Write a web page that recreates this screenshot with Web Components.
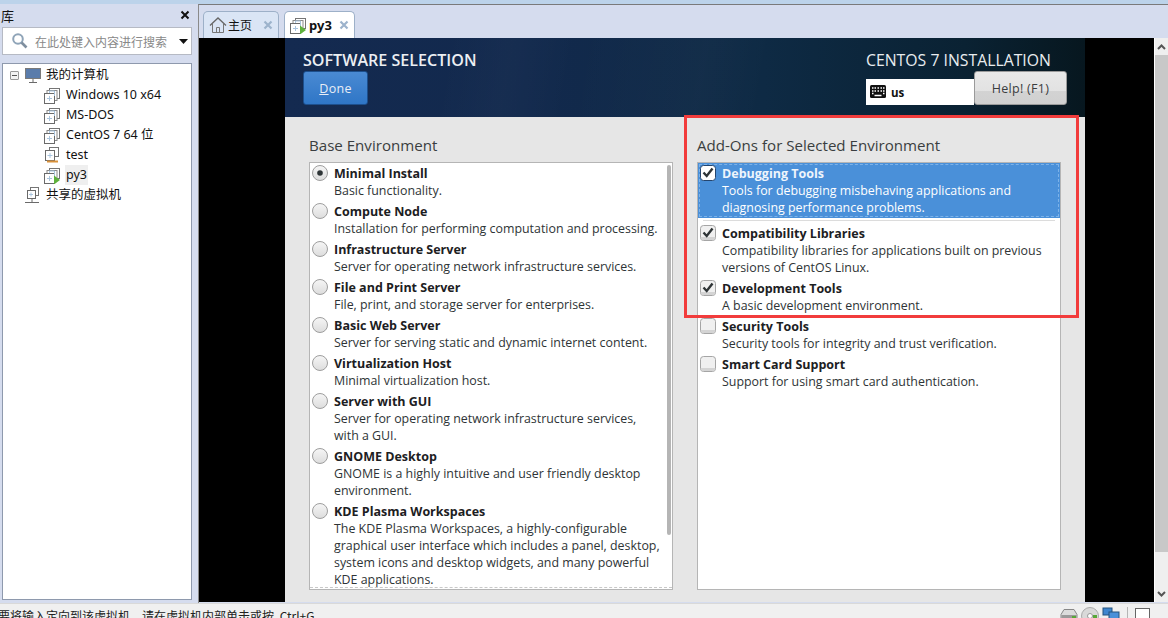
<!DOCTYPE html>
<html>
<head>
<meta charset="utf-8">
<style>
  html, body { margin: 0; height: 100%; overflow: hidden; background: #d5dcee; }
  body { font-family: "Noto Sans", "Noto Sans CJK SC", sans-serif; }
</style>
</head>
<body>
<vm-app></vm-app>

<script>
  const VM_SQUARES = `<rect x="5.5" y="2.5" width="10" height="10" fill="#fff" stroke="#757575"/><rect x="3" y="4.5" width="10" height="10" fill="#fff" stroke="#8a8a8a"/><rect x=".5" y="7.5" width="10" height="10" fill="#fff" stroke="#6a6a6a"/><path d="M3 12.5h5M5.5 10v5M5.5 7v-2h5v5" stroke="#a9c4de"/>`;
  const VM_ICON = `<svg width="18" height="18" viewBox="0 0 18 18" fill="none">${VM_SQUARES}</svg>`;
  const VM_RUN = `<svg slot="icon" width="18" height="18" viewBox="0 0 18 18" fill="none">${VM_SQUARES}<path d="M10 9.5l6 4.5-6 4.5z" fill="#5fb13d"/></svg>`;

  // small helper so every component is one line of boilerplate
  function define(name, html) {
    customElements.define(name, class extends HTMLElement {
      constructor() {
        super();
        this.attachShadow({ mode: 'open' }).innerHTML = html;
      }
    });
  }

  define('tree-item', `
    <style>
      :host { display: flex; align-items: center; height: 20px; color: #111; font: 12.5px "Noto Sans", "Noto Sans CJK SC", sans-serif; }
      #ico { width: 20px; height: 18px; flex: none; margin-right: 1px; }
      #lbl { padding: 0 1px; line-height: 20px; white-space: nowrap; }
      :host([current]) #lbl { background: #efefef; }
    </style>
    <span id="ico"><slot name="icon"></slot></span><span id="lbl"><slot></slot></span>
  `);

  define('lib-pane', `
    <style>
      :host { display: flex; flex-direction: column; width: 196px; flex: none; box-sizing: border-box; padding: 0 4px 3px 2px; background: #d5dcee; }
      #head { display: flex; justify-content: space-between; align-items: center; height: 22px; font: 13px "Noto Sans CJK SC", sans-serif; color: #111; margin-left: -1px; }
      #head svg { margin-right: 2px; }
      #search { display: flex; align-items: center; height: 28px; box-sizing: border-box; border: 1px solid #b6bac4; background: #fff; margin-top: 1px; color: #888; font: 12px "Noto Sans CJK SC", sans-serif; }
      #search span { flex: 1; margin-left: 6px; white-space: nowrap; }
      #search svg:first-child { margin-left: 8px; }
      #search .caret { margin-right: 3px; }
      #tree { flex: 1; margin-top: 8px; background: #fff; border: 1px solid #8e99ad; padding: 1px 0 0 7px; box-sizing: border-box; }
      .sub { padding-left: 34px; }
      .row1 { display: flex; }
      .minus { width: 9px; height: 9px; border: 1px solid #9a9a9a; border-radius: 1px; margin: 6px 5px 0 0; position: relative; background: #f3f3f3; flex: none; box-sizing: border-box; }
      .minus::after { content: ''; position: absolute; left: 1px; right: 1px; top: 3px; height: 1px; background: #555; }
    </style>
    <div id="head"><span>库</span>
      <svg width="10" height="10" viewBox="0 0 10 10"><path d="M1.5 1.5l7 7M8.5 1.5l-7 7" stroke="#111" stroke-width="2"/></svg>
    </div>
    <div id="search">
      <svg width="18" height="18" viewBox="0 0 18 18" fill="none"><circle cx="7" cy="7" r="4.8" stroke="#8fa4b8" stroke-width="2"/><path d="M10.5 10.5l5 5" stroke="#7f8f9f" stroke-width="2.6"/></svg>
      <span>在此处键入内容进行搜索</span>
      <svg class="caret" width="9" height="5" viewBox="0 0 9 5"><path d="M0 0h9L4.5 5z" fill="#111"/></svg>
    </div>
    <div id="tree">
      <div class="row1"><span class="minus"></span>
        <tree-item>
          <svg slot="icon" width="20" height="18" viewBox="0 0 20 18" fill="none"><rect x="1.5" y="2.5" width="15" height="10" fill="#5a7cab" stroke="#7a7a7a"/><path d="M9 13v3M5 16.5h8" stroke="#6a6a6a"/></svg>
          我的计算机
        </tree-item>
      </div>
      <div class="sub">
        <tree-item><span slot="icon">${VM_ICON}</span>Windows 10 x64</tree-item>
        <tree-item><span slot="icon">${VM_ICON}</span>MS-DOS</tree-item>
        <tree-item><span slot="icon">${VM_ICON}</span>CentOS 7 64 位</tree-item>
        <tree-item>
          <svg slot="icon" width="18" height="18" viewBox="0 0 18 18" fill="none"><rect x="5.5" y="1.5" width="9" height="9" fill="#fff" stroke="#757575"/><rect x="1.5" y="4.5" width="9" height="10" fill="#fff" stroke="#6a6a6a"/><path d="M3 15.5h11" stroke="#d9913a" stroke-width="2"/><path d="M3.5 9.5h5M6 7v5" stroke="#a9c4de"/></svg>
          test
        </tree-item>
        <tree-item current>${VM_RUN}py3</tree-item>
      </div>
      <div style="padding-left:14px">
        <tree-item>
          <svg slot="icon" width="18" height="18" viewBox="0 0 18 18" fill="none"><rect x="6.5" y="1.5" width="8" height="8" fill="#fff" stroke="#757575"/><rect x="3.5" y="4.5" width="8" height="8" fill="#fff" stroke="#6a6a6a"/><path d="M8 13v3M1 16.5h14" stroke="#6a6a6a"/><path d="M5 8.5h4M7 6.5v4" stroke="#a9c4de"/></svg>
          共享的虚拟机
        </tree-item>
      </div>
    </div>
  `);

  define('vm-tab', `
    <style>
      :host { display: flex; align-items: center; height: 27px; box-sizing: border-box; border: 1px solid #9db0c8; border-bottom: 0; border-radius: 5px 5px 0 0; background: #dae5f5; padding: 0 5px; font: 12px "Noto Sans", "Noto Sans CJK SC", sans-serif; color: #111; gap: 1px; }
      :host([active]) { background: #fff; font-weight: 700; font-size: 13px; }
      svg.x { margin-left: auto; }
    </style>
    <slot name="icon"></slot><slot></slot>
    <svg class="x" width="10" height="10" viewBox="0 0 10 10"><path d="M1.5 1.5l7 7M8.5 1.5l-7 7" stroke="#9db3cc" stroke-width="2.2"/></svg>
  `);

  define('vm-tabs', `
    <style>
      :host { display: flex; align-items: flex-end; gap: 5px; height: 33px; flex: none; padding-left: 4px; box-sizing: border-box; background: #d5dcee; }
    </style>
    <vm-tab style="width:76px">
      <svg slot="icon" width="18" height="18" viewBox="0 0 18 18" fill="none"><path d="M1 9.5L9 2l8 7.5" stroke="#666" stroke-width="1.3"/><path d="M3.5 8v8.5h11V8M7.5 16.5v-5h3v5" stroke="#777"/></svg>
      主页
    </vm-tab>
    <vm-tab active style="width:71px">${VM_RUN}py3</vm-tab>
  `);

  define('gtk-button', `
    <style>
      :host { display: flex; align-items: center; justify-content: center; box-sizing: border-box; border-radius: 3px; font: 12.5px "Open Sans", "Noto Sans", sans-serif; letter-spacing: .3px; }
      :host([kind=done]) { width: 65px; height: 34px; background: linear-gradient(#4a8ad3, #2f76c6); border: 1px solid #1d4f8c; color: #e8eef6; }
      :host([kind=help]) { width: 93px; height: 34px; background: linear-gradient(#e8e8e8 0, #e2e2e2 60%, #d3d3d3 60%, #d0d0d0); border: 1px solid #9a9a9a; color: #3a3d3e; }
    </style>
    <slot></slot>
  `);

  define('spoke-header', `
    <style>
      :host { display: flex; justify-content: space-between; height: 79px; flex: none; box-sizing: border-box; padding: 11px 18px 0 18px; color: #fff;
        background:
          linear-gradient(100deg, transparent 20%, rgba(255,255,255,.02) 28%, transparent 36%, rgba(255,255,255,.02) 52%, transparent 60%),
          linear-gradient(90deg, #142a50 0, #12294d 30%, #0e2a44 60%, #0a2233 85%, #07171f 100%); }
      h1 { margin: 0; font: 600 16.1px/22px "Open Sans", sans-serif; color: #eceff3; white-space: nowrap; }
      #r { display: flex; flex-direction: column; align-items: flex-start; }
      #t { font: 15.8px/22px "Open Sans", sans-serif; color: #e8ecef; white-space: nowrap; }
      #row { display: flex; align-items: flex-end; height: 34px; }
      #kb { display: flex; align-items: center; width: 108px; height: 26px; background: #fff; color: #111; font: 700 11.5px "Open Sans", sans-serif; box-sizing: border-box; padding-left: 4px; gap: 5px; }
    </style>
    <div id="l"><h1>SOFTWARE SELECTION</h1><gtk-button kind="done"><span><u>D</u>one</span></gtk-button></div>
    <div id="r">
      <div id="t">CENTOS 7 INSTALLATION</div>
      <div id="row">
        <div id="kb">
          <svg width="16" height="14" viewBox="0 0 16 14"><rect width="16" height="13" rx="1.5" fill="#111"/><path d="M2 3h1.5M4.5 3H6M7.5 3H9M10.5 3H12M13 3h1.5M2 6h1.5M4.5 6H6M7.5 6H9M10.5 6H12M13 6h1.5M2 8.5h1.5M13 8.5h1.5M4.5 10.5h7" stroke="#fff" stroke-width="1.3"/></svg>
          us
        </div>
        <gtk-button kind="help">Help! (F1)</gtk-button>
      </div>
    </div>
  `);

  define('option-row', `
    <style>
      :host { display: flex; padding: 0 0 4px 1px; color: #2e3436; font: 12.4px/17px "Open Sans", "Noto Sans", sans-serif; }
      :host([selected]) { color: #fff; background: #4a90d9; padding: 2px 0 2px 1px; margin-bottom: 2px; outline: 1px dashed #7db2e8; outline-offset: -2px; }
      #m { width: 18px; height: 18px; flex: none; margin-right: 5px; margin-top: -1px; }
      #txt { flex: 1; }
      #t { font-weight: 700; font-size: 12.5px; display: block; white-space: nowrap; color: #1c2022; }
      :host([selected]) #t { color: #eef5fc; }
      #d { display: block; }
    </style>
    <span id="m"><slot name="mark"></slot></span>
    <div id="txt"><span id="t"><slot name="title"></slot></span><span id="d"><slot></slot></span></div>
  `);

  define('option-list', `
    <style>
      :host { display: block; flex: 1; min-height: 0; }
      h2 { margin: 0; font: 400 15.1px/20px "Open Sans", sans-serif; color: #3a3e40; height: 27px; padding-top: 18px; white-space: nowrap; }
      #box { position: relative; height: 428px; box-sizing: border-box; border: 1px solid #b5b5b5; background: #fff; overflow: hidden; padding-top: var(--box-top, 2px); }
      .bar { position: absolute; right: 1px; top: 2px; width: 4px; height: 370px; background: #b5b5b5; border-radius: 2px; }
      .dash { position: absolute; left: 0; right: 0; bottom: 1px; border-bottom: 1px dashed #c8c8c8; }
      :host(:not([scroll])) .bar, :host(:not([scroll])) .dash { display: none; }
    </style>
    <h2><slot name="heading"></slot></h2>
    <div id="box"><slot></slot><div class="bar"></div><div class="dash"></div></div>
  `);

  const radio = on => `<svg slot="mark" width="18" height="18" viewBox="0 0 18 18"><defs><linearGradient id="r" x1="0" y1="0" x2="0" y2="1"><stop offset="0" stop-color="#f6f6f6"/><stop offset="1" stop-color="#dcdcdc"/></linearGradient></defs><circle cx="9" cy="9" r="7.5" fill="url(#r)" stroke="#9e9e9e"/>${on ? '<circle cx="9" cy="9" r="2.8" fill="#2e3436"/>' : ''}</svg>`;
  const box = (on, sel) => `<svg slot="mark" width="18" height="18" viewBox="0 0 18 18"><rect x="1.5" y="1.5" width="15" height="15" rx="3" fill="${sel ? '#fff' : '#f0f0f0'}" stroke="${sel ? '#24456e' : '#a5a5a5'}"/>${sel ? '' : '<path d="M2 13h14v1a2 2 0 0 1-2 2H4a2 2 0 0 1-2-2z" fill="#d4d4d4"/>'}${on ? '<path d="M4.5 8.5l3.2 3.5 5.8-7.5" fill="none" stroke="#2e3436" stroke-width="2.4"/>' : ''}</svg>`;

  const BASE = [
    ['Minimal Install', 'Basic functionality.', 1],
    ['Compute Node', 'Installation for performing computation and processing.'],
    ['Infrastructure Server', 'Server for operating network infrastructure services.'],
    ['File and Print Server', 'File, print, and storage server for enterprises.'],
    ['Basic Web Server', 'Server for serving static and dynamic internet content.'],
    ['Virtualization Host', 'Minimal virtualization host.'],
    ['Server with GUI', 'Server for operating network infrastructure services,<br>with a GUI.'],
    ['GNOME Desktop', 'GNOME is a highly intuitive and user friendly desktop<br>environment.'],
    ['KDE Plasma Workspaces', 'The KDE Plasma Workspaces, a highly-configurable<br>graphical user interface which includes a panel, desktop,<br>system icons and desktop widgets, and many powerful<br>KDE applications.'],
  ];
  const ADDONS = [
    ['Debugging Tools', 'Tools for debugging misbehaving applications and<br>diagnosing performance problems.', 1, 1],
    ['Compatibility Libraries', 'Compatibility libraries for applications built on previous<br>versions of CentOS Linux.', 1],
    ['Development Tools', 'A basic development environment.', 1],
    ['Security Tools', 'Security tools for integrity and trust verification.'],
    ['Smart Card Support', 'Support for using smart card authentication.'],
  ];

  const rows = (list, mark) => list.map(([t, d, on, sel]) =>
    `<option-row ${sel ? 'selected' : ''}>${mark(on, sel)}<span slot="title">${t}</span>${d}</option-row>`).join('');

  define('spoke-body', `
    <style>
      :host { display: flex; flex: 1; min-height: 0; gap: 24px; padding: 0 24px 12px 24px; background: #e6e6e6; box-sizing: border-box; }
      .sep { height: 1px; background: #dcdcdc; margin: 0 5px 4px 5px; }
    </style>
    <option-list scroll><span slot="heading">Base Environment</span>${rows(BASE, radio)}</option-list>
    <option-list style="--box-top:0"><span slot="heading">Add-Ons for Selected Environment</span>
      ${rows(ADDONS.slice(0, 1), box)}<div class="sep"></div>${rows(ADDONS.slice(1), box)}
    </option-list>
  `);

  define('vm-scrollbar', `
    <style>
      :host { display: flex; flex-direction: column; width: 14px; box-sizing: border-box; border-left: 1px solid #fff; flex: none; background: #efefef; }
      .b { height: 17px; display: flex; align-items: center; justify-content: center; flex: none; }
      #thumb { height: 497px; background: #c8c8c8; flex: none; }
      #rest { flex: 1; }
    </style>
    <div class="b"><svg width="9" height="6" viewBox="0 0 9 6"><path d="M1 5l3.5-3.5L8 5" fill="none" stroke="#555" stroke-width="2"/></svg></div>
    <div id="thumb"></div><div id="rest"></div>
    <div class="b"><svg width="9" height="6" viewBox="0 0 9 6"><path d="M1 1l3.5 3.5L8 1" fill="none" stroke="#555" stroke-width="2"/></svg></div>
  `);

  define('vm-console', `
    <style>
      :host { display: flex; flex: 1; min-height: 0; }
      #black { flex: 1; display: flex; background: #000; min-width: 0; padding-left: 86px; }
      #screen { width: 800px; display: flex; flex-direction: column; }
    </style>
    <div id="black"><div id="screen"><spoke-header></spoke-header><spoke-body></spoke-body></div></div>
    <vm-scrollbar></vm-scrollbar>
  `);

  define('status-bar', `
    <style>
      :host { display: flex; justify-content: space-between; align-items: flex-start; height: 14px; flex: none; overflow: hidden; background: #f0f0f0; border-top: 1px solid #d9d9d9; font: 12px/17px "Noto Sans CJK SC", sans-serif; color: #222; }
      span { margin-left: -2px; white-space: nowrap; padding-top: 3px; word-spacing: 3px; }
      #ico { display: flex; gap: 3px; padding-top: 3px; margin-right: 18px; }
      #sep { width: 1px; height: 16px; background: #b5b5b5; margin: 0 4px; }
      #ico svg { flex: none; }
    </style>
    <span>要将输入定向到该虚拟机，请在虚拟机内部单击或按 Ctrl+G</span>
    <div id="ico">
      <svg width="18" height="14" viewBox="0 0 18 14" style="margin-top:2px"><path d="M4 .5h10l3 5v8H1v-8z" fill="#dcdcdc" stroke="#888"/><path d="M1.5 6h15v7h-15z" fill="#9a9a9a"/><path d="M12 7h4v3h-4z" fill="#58a838"/></svg>
      <svg width="18" height="18" viewBox="0 0 18 18"><circle cx="9" cy="9" r="8.5" fill="#d9d9d9" stroke="#aaa"/><circle cx="9" cy="9" r="2.5" fill="#fff" stroke="#999"/><path d="M12 8h4v3h-4z" fill="#58a838"/></svg>
      <svg width="18" height="16" viewBox="0 0 18 16"><rect x="1" y="1" width="9" height="7" fill="#3f86cf" stroke="#24527f"/><rect x="7" y="5" width="10" height="9" fill="#4a90d9" stroke="#24527f"/></svg>
      <div id="sep"></div>
      <svg width="15" height="16" viewBox="0 0 15 16" style="margin-top:1px"><rect x="0.5" y="0.5" width="14" height="15" fill="#fff" stroke="#666"/><path d="M10 15.5v-4h4.5" fill="none" stroke="#999"/></svg>
    </div>
  `);

  define('vm-app', `
    <style>
      :host { display: flex; flex-direction: column; height: 618px; width: 1168px; overflow: hidden; background: #d5dcee; }
      #strip { height: 4px; flex: none; background: #bcd3ea; }
      #main { display: flex; flex: 1; min-height: 0; }
      #work { flex: 1; display: flex; flex-direction: column; min-width: 0; border-top: 1px solid #7a7a7a; border-left: 1px solid #8a8a8a; margin-left: 2px; padding-bottom: 1px; }
      mark-box { position: absolute; left: 684px; top: 115px; width: 395px; height: 203px; box-sizing: border-box; border: 3px solid #f23c3c; }
    </style>
    <div id="strip"></div>
    <div id="main">
      <lib-pane></lib-pane>
      <div id="work">
        <vm-tabs></vm-tabs>
        <vm-console></vm-console>
      </div>
    </div>
    <status-bar></status-bar>
    <mark-box></mark-box>
  `);
</script>
</body>
</html>
